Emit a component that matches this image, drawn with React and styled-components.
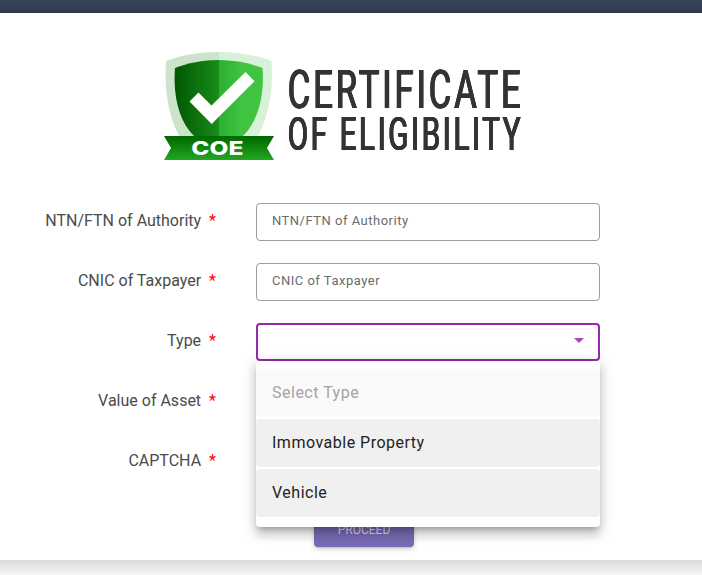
import React from 'react';
import styled, { createGlobalStyle } from 'styled-components';

const GlobalStyle = createGlobalStyle`
  * {
    box-sizing: border-box;
  }

  body {
    margin: 0;
    background: #fff;
    font-family: Roboto, 'Liberation Sans', sans-serif;
    overflow: hidden;
  }
`;

const Page = styled.div`
  display: flex;
  flex-direction: column;
  height: 575px;
`;

const TopBar = styled.header`
  flex: none;
  height: 13px;
  background: linear-gradient(#344555, #303b50);
`;

const Content = styled.main`
  flex: 1;
  display: flex;
  flex-direction: column;
`;

const Footer = styled.footer`
  flex: none;
  height: 15px;
  background: linear-gradient(#dadada, #f7f7f7);
`;

const Brand = styled.div`
  height: 120px;
  margin: 35px 0 35px 160px;
`;

const LogoSvg = styled.svg`
  display: block;
`;

const WordMarkGroup = styled.g`
  filter: drop-shadow(1px 0 0 #333331) drop-shadow(0.8px 0 0 #333331);
`;

const WordMark = styled.text`
  font-family: Roboto, sans-serif;
  font-size: ${({ $size }) => $size}px;
  font-weight: 400;
  fill: #333331;
`;

const RibbonText = styled.text`
  font-family: Inter, sans-serif;
  font-size: 19px;
  font-weight: 800;
  fill: #fff;
`;

const Form = styled.form`
  display: flex;
  flex-direction: column;
  gap: 22px;
`;

const Row = styled.div`
  display: grid;
  grid-template-columns: 216px 344px;
  column-gap: 40px;
  height: 38px;
`;

const Label = styled.label`
  display: flex;
  justify-content: flex-end;
  gap: 8px;
  padding-top: 6px;
  font-size: 16px;
  line-height: 24px;
  color: #4b4b4b;
  white-space: nowrap;
`;

const Required = styled.span`
  color: #f00;
`;

const Input = styled.input`
  width: 100%;
  height: 38px;
  padding: 0 15px 3px;
  border: 1px solid #9e9e9e;
  border-radius: 4px;
  outline: none;
  font-family: inherit;
  font-size: 13px;
  letter-spacing: 0.5px;

  &::placeholder {
    color: #6b6b6b;
    opacity: 1;
  }
`;

const Select = styled.div`
  position: relative;
  display: flex;
  align-items: center;
  justify-content: flex-end;
  height: 38px;
  padding: 0 14px 3px;
  border: 2px solid #9528ab;
  border-radius: 4px;
`;

const Arrow = styled.svg`
  display: block;
  fill: #a943bb;
`;

const Menu = styled.ul`
  position: absolute;
  z-index: 2;
  top: 36px;
  left: -2px;
  width: 344px;
  height: 166px;
  margin: 0;
  padding: 8px 0;
  display: flex;
  flex-direction: column;
  gap: 2px;
  list-style: none;
  background: #fff;
  border-radius: 0 0 4px 4px;
  box-shadow:
    0 5px 5px -3px rgba(0, 0, 0, 0.2),
    0 8px 10px 1px rgba(0, 0, 0, 0.14),
    0 3px 14px 2px rgba(0, 0, 0, 0.12);
`;

const Option = styled.li`
  height: 48px;
  padding: 0 16px;
  border-radius: 4px;
  font-size: 16px;
  line-height: 47px;
  letter-spacing: 0.5px;
  color: ${({ $disabled }) => ($disabled ? '#a3a3a3' : '#222')};
  background: ${({ $disabled }) => ($disabled ? '#fafafa' : '#f0f0f0')};
`;

const Actions = styled.div`
  display: flex;
  padding-left: 314px;
  margin-top: 8px;
`;

const Button = styled.button`
  width: 100px;
  height: 36px;
  padding: 2px 0 0;
  border: 0;
  border-radius: 4px;
  background: #786bb4;
  color: #e0dced;
  font-family: inherit;
  font-size: 12px;
  box-shadow:
    0 3px 1px -2px rgba(0, 0, 0, 0.1),
    0 2px 5px rgba(0, 0, 0, 0.2);
`;

const options = [
  { label: 'Select Type', disabled: true },
  { label: 'Immovable Property' },
  { label: 'Vehicle' },
];

const Logo = () => (
  <LogoSvg width="370" height="120" viewBox="160 48 370 120">
    <defs>
      <linearGradient id="shieldLeft">
        <stop offset="0" stopColor="#005700" />
        <stop offset="1" stopColor="#198d19" />
      </linearGradient>
      <linearGradient id="shieldRight">
        <stop offset="0" stopColor="#2caf2f" />
        <stop offset="0.5" stopColor="#3fc341" />
        <stop offset="1" stopColor="#40c442" />
      </linearGradient>
      <linearGradient id="ribbon" x2="0" y2="1">
        <stop offset="0" stopColor="#006600" />
        <stop offset="0.3" stopColor="#087a08" />
        <stop offset="1" stopColor="#22a722" />
      </linearGradient>
    </defs>
    <path d="M219 52 C200 52 181 55 166 61 C164 89 168 116 180 138 H219 Z" fill="#cce4cc" />
    <path d="M219 52 C237 52 256 55 271.500 61 C273.500 89 269 116 257 138 H219 Z" fill="#d9f1d9" />
    <path d="M219 60 C202 60 188 63 175 68 C173 94 178 121 195 137 H219 Z" fill="url(#shieldLeft)" />
    <path d="M219 60 C235 60 249 63 262.500 68 C264.500 94 259 121 242 137 H219 Z" fill="url(#shieldRight)" />
    <path d="M189.500 101.500 L198.500 92.500 L211.500 105.500 L245.500 72 L254.500 81.300 L211.700 124 Z" fill="#fff" />
    <path d="M164 136 H274 L267 148 L274 160 H164 L171 148 Z" fill="url(#ribbon)" />
    <RibbonText x="191.300" y="155.400" textLength="52" lengthAdjust="spacingAndGlyphs">COE</RibbonText>
    <WordMarkGroup>
      <g transform="translate(287.300 107.800) scale(0.64 1)">
        <WordMark $size={54} textLength="364">CERTIFICATE</WordMark>
      </g>
      <g transform="translate(287.300 149.500) scale(0.65 1)">
        <WordMark $size={45.500} textLength="358">OF ELIGIBILITY</WordMark>
      </g>
    </WordMarkGroup>
  </LogoSvg>
);

const FieldLabel = ({ children }) => (
  <Label>
    {children}
    <Required>*</Required>
  </Label>
);

const App = () => (
  <Page>
    <GlobalStyle />
    <TopBar />
    <Content>
      <Brand>
        <Logo />
      </Brand>
      <Form>
        <Row>
          <FieldLabel>NTN/FTN of Authority</FieldLabel>
          <Input placeholder="NTN/FTN of Authority" />
        </Row>
        <Row>
          <FieldLabel>CNIC of Taxpayer</FieldLabel>
          <Input placeholder="CNIC of Taxpayer" />
        </Row>
        <Row>
          <FieldLabel>Type</FieldLabel>
          <Select>
            <Arrow width="10" height="5" viewBox="0 0 10 5">
              <path d="M0 0h10L5 5z" />
            </Arrow>
            <Menu>
              {options.map((option) => (
                <Option key={option.label} $disabled={option.disabled}>
                  {option.label}
                </Option>
              ))}
            </Menu>
          </Select>
        </Row>
        <Row>
          <FieldLabel>Value of Asset</FieldLabel>
        </Row>
        <Row>
          <FieldLabel>CAPTCHA</FieldLabel>
        </Row>
        <Actions>
          <Button type="button">PROCEED</Button>
        </Actions>
      </Form>
    </Content>
    <Footer />
  </Page>
);

export default App;
